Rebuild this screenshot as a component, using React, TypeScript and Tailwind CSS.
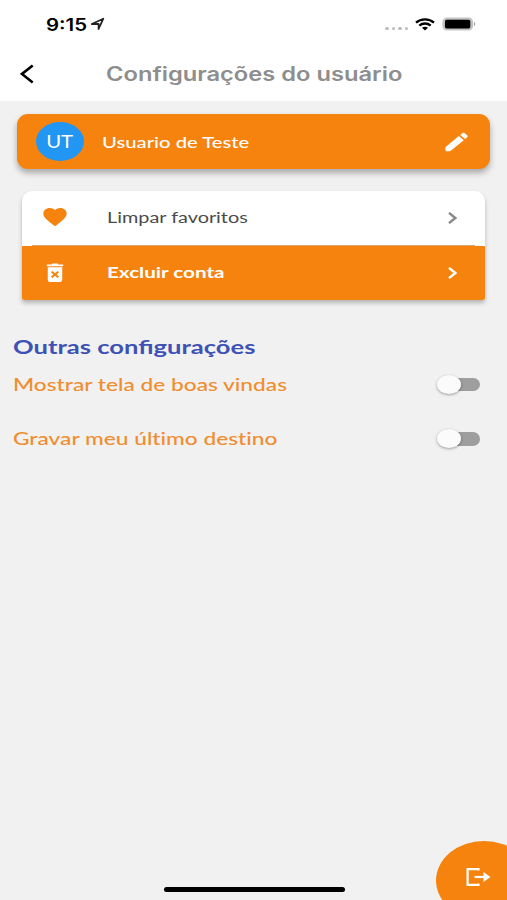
import type { ReactNode } from 'react';
import clsx from 'clsx';

type TextProps = { className?: string; children: ReactNode };

// Texto ensanchado en horizontal desde su borde izquierdo
function WideText({ className, children }: TextProps) {
  return <span className={clsx('inline-block origin-left whitespace-nowrap', className)}>{children}</span>;
}

function StatusBar() {
  return (
    <div className="flex h-[48px] items-center pl-[46px] pr-[31px]">
      <WideText className="mt-[3px] w-[44px] scale-x-[1.2] font-['Inter',sans-serif] text-[17px] font-semibold text-black">
        9:15
      </WideText>
      <svg className="h-[14px] w-[15px]" viewBox="0 0 15 14" fill="none">
        <path d="M1.800 7 13.300 1.700 8.600 12V7Z" stroke="#222" strokeWidth="1.8" strokeLinejoin="round" />
      </svg>
      <div className="ml-auto flex items-center">
        <div className="mt-[9px] flex gap-[3px]">
          {[0, 1, 2, 3].map((dot) => (
            <span key={dot} className="h-[3px] w-[3.5px] rounded-full bg-[#bdbdbd]" />
          ))}
        </div>
        <svg className="ml-[7px] h-[13px] w-[20px]" viewBox="0 0 20 13" fill="none" stroke="#000" strokeWidth="2.3">
          <path d="M1 4.600C6 .2 14 .2 19 4.600" />
          <path d="M4.300 7.600c3.300-2.800 8.100-2.800 11.400 0" />
          <path d="M7 9.800c1.700-1.400 4.300-1.400 6 0L10 12.600Z" fill="#000" stroke="none" />
        </svg>
        <svg className="ml-[7px] h-[14px] w-[34px]" viewBox="0 0 34 14">
          <rect x="1.300" y="1.300" width="29" height="11.400" rx="3.800" fill="#bbb" stroke="#c4c4c4" strokeWidth="1.8" />
          <rect x="3" y="2.800" width="25.300" height="8.600" rx="1.600" fill="#000" />
          <path d="M32 4.800c1.800.7 1.800 3.700 0 4.400Z" fill="#aaa" />
        </svg>
      </div>
    </div>
  );
}

function Header() {
  return (
    <header className="h-[101px] bg-white">
      <StatusBar />
      <div className="flex h-[52px] items-center pl-[20px]">
        <svg className="h-[20px] w-[14px]" viewBox="0 0 14 20" fill="none">
          <path d="M12.700 1.400 2 9.900l10.700 8.500" stroke="#000" strokeWidth="2.600" />
        </svg>
        <WideText className="ml-[71.5px] mt-[1px] scale-x-[1.215] font-['Inter',sans-serif] text-[19.5px] font-semibold text-[#8e8e8e]">
          Configurações do usuário
        </WideText>
      </div>
    </header>
  );
}

function Chevron({ className }: { className: string }) {
  return (
    <svg className={clsx('h-[12px] w-[9px]', className)} viewBox="0 0 9 12" fill="none">
      <path d="M1 .9 7.300 6 1 11.100" stroke="currentColor" strokeWidth="2.500" />
    </svg>
  );
}

function UserCard() {
  return (
    <section className="mx-[17px] mt-[13px] flex h-[55px] items-center rounded-[11px] bg-[#f6830d] pl-[19px] pr-[19px] text-white shadow-[0_4px_6px_rgba(0,0,0,0.3)]">
      <div className="flex h-[39px] w-[48px] items-center justify-center rounded-[50%] bg-[#2196f3]">
        <span className="mt-[2px] inline-block scale-x-[1.16] text-[17.5px]">UT</span>
      </div>
      <WideText className="ml-[18px] scale-x-[1.265] text-[16px] font-medium">Usuario de Teste</WideText>
      <svg className="ml-auto h-[24px] w-[29px]" viewBox="0 0 24 24" preserveAspectRatio="none" fill="currentColor">
        <path d="M3.300 16.800c-.3.300-.5.700-.5 1.100V20c0 .8.500 1.300 1.300 1.300h2.100c.4 0 .8-.2 1.100-.5L18 10.200l-4.100-4.100zM21 7.100c.5-.5.500-1.200 0-1.700L18.700 3.100c-.5-.5-1.200-.5-1.700 0l-1.900 1.900 4 4z" />
      </svg>
    </section>
  );
}

function ActionsCard() {
  return (
    <section className="mx-[22px] mt-[22px] rounded-t-[10px] rounded-b-[2px] bg-white shadow-[0_3px_4px_rgba(0,0,0,0.25)]">
      <div className="flex h-[54px] items-center pl-[19px] pr-[28px]">
        <svg
          className="-mt-[2px] h-[24px] w-[28px] text-[#f6830d]"
          viewBox="0 0 24 24"
          preserveAspectRatio="none"
          fill="currentColor"
        >
          <path d="M12 21.350l-1.450-1.320C5.400 15.360 2 12.280 2 8.500 2 5.420 4.420 3 7.500 3c1.740 0 3.410.81 4.500 2.090C13.090 3.810 14.760 3 16.500 3 19.580 3 22 5.420 22 8.500c0 3.780-3.400 6.860-8.550 11.540z" />
        </svg>
        <WideText className="ml-[38px] scale-x-[1.28] text-[15.5px] text-[#4b4b4b]">
          Limpar favoritos
        </WideText>
        <Chevron className="ml-auto text-[#8a8a8a]" />
      </div>
      <div className="mx-[10px] h-px bg-[#d3a577]" />
      <div className="flex h-[54px] items-center rounded-b-[2px] bg-[#f6830d] pl-[19px] pr-[28px] text-white">
        <svg className="h-[24px] w-[28px]" viewBox="0 0 24 24" preserveAspectRatio="none" fill="currentColor">
          <path d="M5 5.300V3.500h4L10 2.600h4l1 .9h4v1.800z" />
          <path
            fillRule="evenodd"
            d="M5.800 6.300h12.400V19a2 2 0 0 1-2 2H7.800a2 2 0 0 1-2-2zM9.700 10l-1.200 1.300 2.100 2.200-2.100 2.200L9.700 17l2.300-2.200 2.300 2.200 1.200-1.300-2.100-2.200 2.100-2.200L14.300 10 12 12.200z"
          />
        </svg>
        <WideText className="ml-[38px] scale-x-[1.33] text-[15.5px] font-bold">Excluir conta</WideText>
        <Chevron className="ml-auto" />
      </div>
    </section>
  );
}

function Toggle() {
  return (
    <div className="flex h-[20px] w-[43px] items-center">
      <span className="z-10 h-[19px] w-[24px] shrink-0 rounded-[50%] bg-[#fbfbfb] shadow-[0_1px_3px_rgba(0,0,0,0.35)]" />
      <span className="-ml-[16px] h-[13.5px] w-[35px] shrink-0 rounded-[8px] bg-[#9e9e9e]" />
    </div>
  );
}

function SettingRow({ label }: { label: string }) {
  return (
    <div className="flex h-[54.5px] items-center justify-between pr-[27px]">
      <WideText className="scale-x-[1.335] text-[17px] font-medium text-[#f08d2e] [font-variant-ligatures:none]">
        {label}
      </WideText>
      <Toggle />
    </div>
  );
}

export default function App() {
  return (
    <main className="relative h-[900px] w-[507px] overflow-hidden bg-[#f1f1f1] font-['Lato',sans-serif]">
      <Header />
      <UserCard />
      <ActionsCard />

      <section className="mt-[32px] pl-[13px]">
        <h2 className="h-[25px] leading-[29px] text-[#3f51b5]">
          <WideText className="scale-x-[1.345] text-[19px] font-bold">Outras configurações</WideText>
        </h2>
        <SettingRow label="Mostrar tela de boas vindas" />
        <SettingRow label="Gravar meu último destino" />
      </section>

      {/* Botón de salida, recortado por la esquina */}
      <button className="absolute left-[436px] top-[841px] h-[79px] w-[96px] rounded-[50%] bg-[#f6830d] text-white">
        <svg className="absolute left-[30px] top-[27px] h-[18px] w-[25px]" viewBox="0 0 25 18" fill="none">
          <path d="M12.500 2.600V1.200H1.600v15.600h10.900v-1.400" stroke="currentColor" strokeWidth="2.200" />
          <path d="M8.500 9h10" stroke="currentColor" strokeWidth="2.200" />
          <path d="M17.500 4 24.500 9l-7 5z" fill="currentColor" />
        </svg>
      </button>

      {/* Indicador de inicio */}
      <div className="absolute left-[164px] top-[887px] h-[5px] w-[181px] rounded-full bg-black" />
    </main>
  );
}
